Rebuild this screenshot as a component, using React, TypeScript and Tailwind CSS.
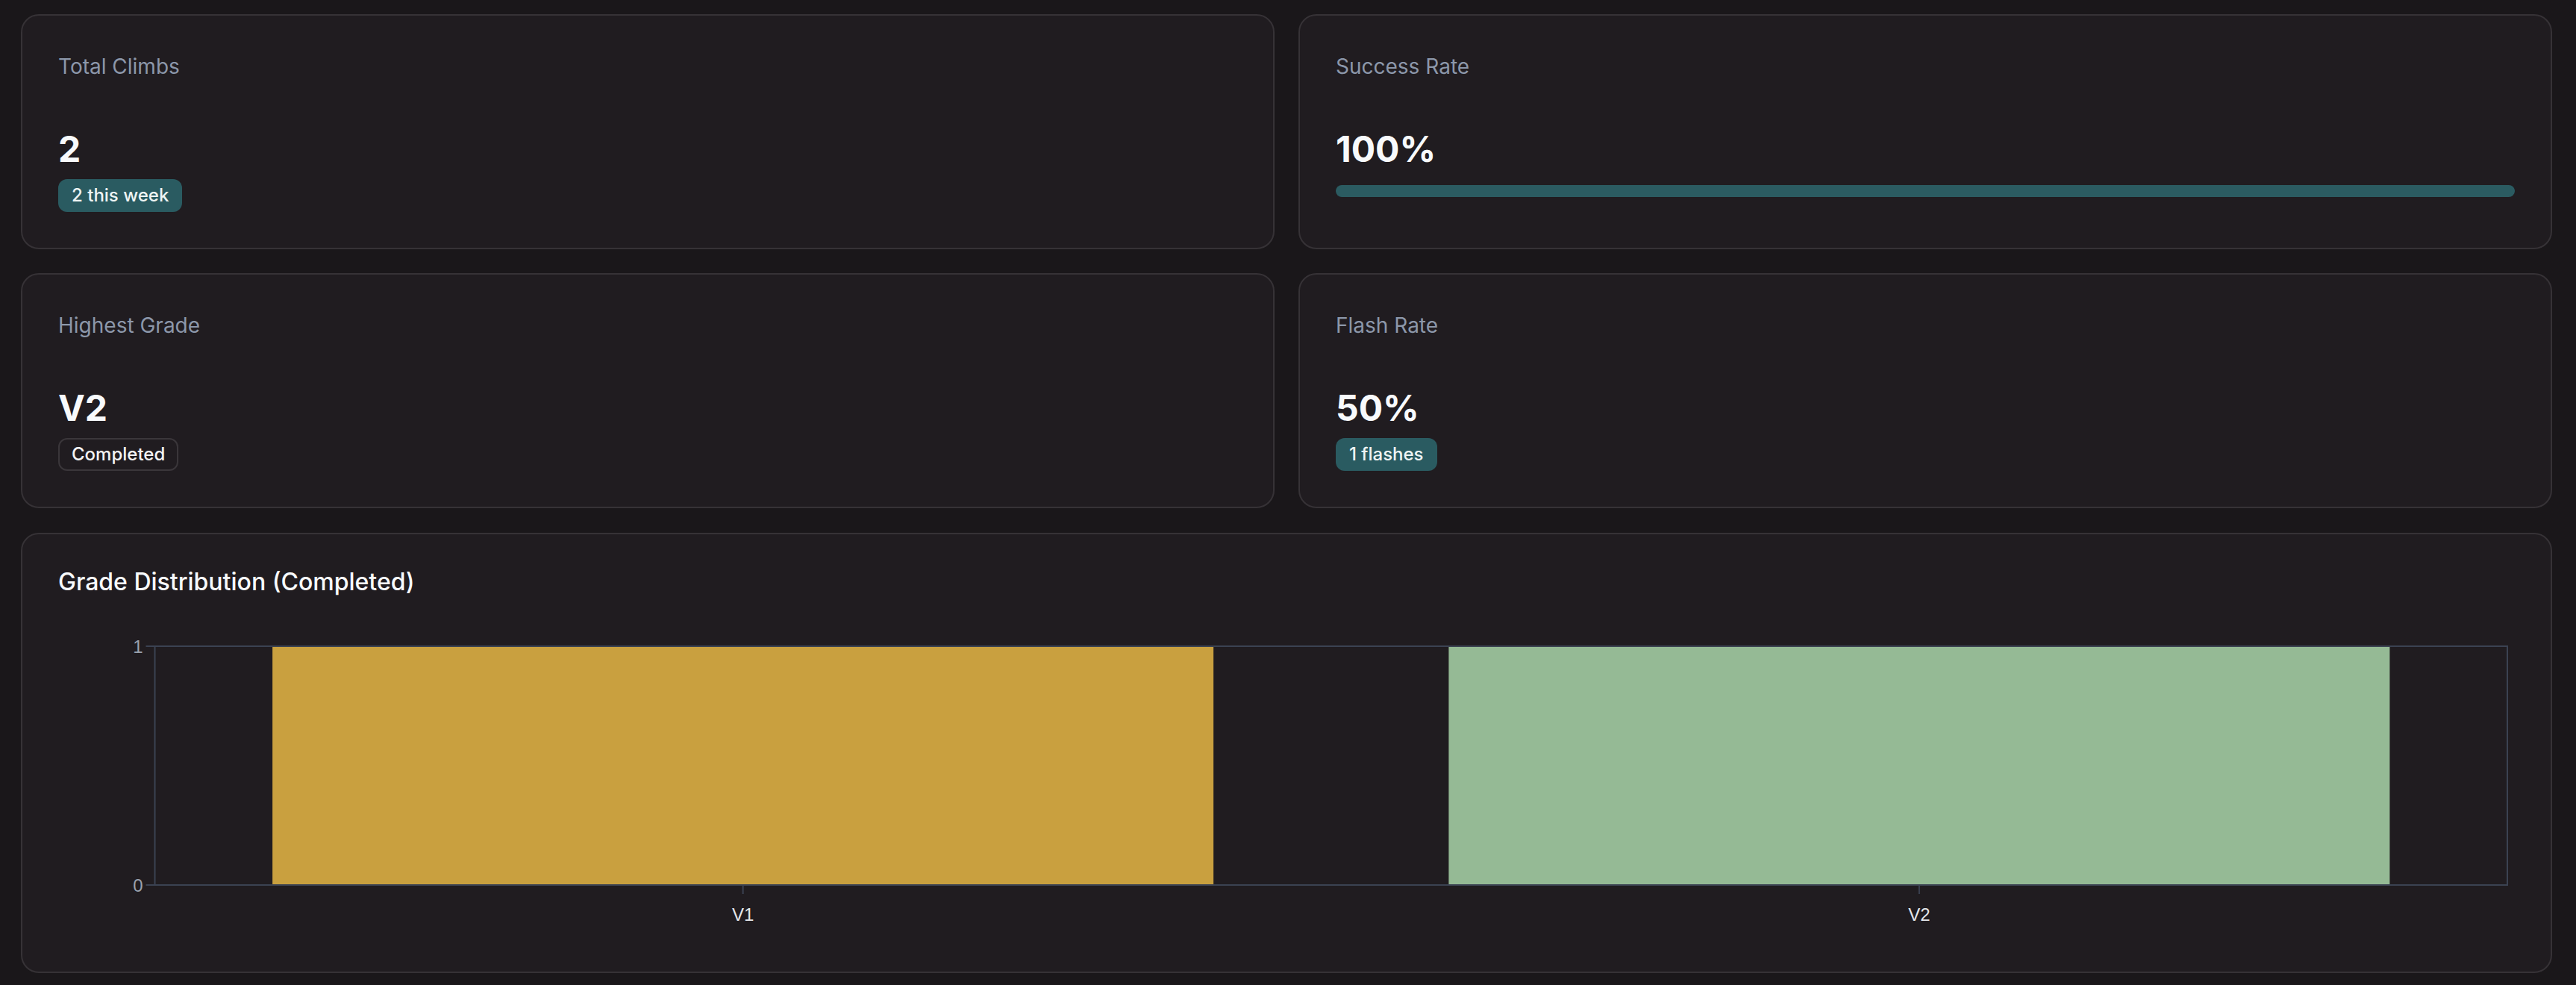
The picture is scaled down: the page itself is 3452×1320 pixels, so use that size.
import React from "react"

type Stat = {
    title: string
    value: string
    badge?: string
    outline?: boolean
    progress?: number
}

const stats: Stat[] = [
    { title: "Total Climbs", value: "2", badge: "2 this week" },
    { title: "Success Rate", value: "100%", progress: 100 },
    { title: "Highest Grade", value: "V2", badge: "Completed", outline: true },
    { title: "Flash Rate", value: "50%", badge: "1 flashes" },
]

const grades = [
    { label: "V1", count: 1, color: "#c9a03f" },
    { label: "V2", count: 1, color: "#95ba95" },
]

function StatCard({ stat }: { stat: Stat }) {
    return (
        <div className="rounded-[24px] border-2 border-[#363236] bg-[#201c20] p-[48px]">
            <div className="text-[28px] leading-[40px] text-[#8c97aa]">{stat.title}</div>
            <div className="mt-[59px] text-[48px] leading-[64px] font-bold text-[#f8fafc]">{stat.value}</div>
            {stat.badge && (
                <div
                    className={
                        stat.outline
                            ? "mt-[8px] inline-flex h-[44px] items-center rounded-[12px] border-2 border-[#3a363a] px-[16px] text-[24px] font-medium text-[#f4f4f5]"
                            : "mt-[8px] inline-flex h-[44px] items-center rounded-[12px] bg-[#2a5b61] px-[18px] text-[24px] font-medium text-[#eef4f4]"
                    }
                >
                    {stat.badge}
                </div>
            )}
            {stat.progress !== undefined && (
                <div className="mt-[16px] h-[16px] w-full overflow-hidden rounded-full bg-[#243f44]">
                    <div className="h-full rounded-full bg-[#2b5b61]" style={{ width: `${stat.progress}%` }} />
                </div>
            )}
        </div>
    )
}

function GradeChart() {
    // pixel coordinates inside the chart box
    const w = 3292
    const h = 458
    const left = 129.5
    const right = 3282
    const top = 70
    const bottom = 390
    const band = (right - left) / grades.length
    const max = 1

    return (
        <svg width={w} height={h} viewBox={`0 0 ${w} ${h}`} className="block">
            {grades.map((g, i) => {
                const x = left + band * i + band * 0.1
                const bh = ((bottom - top) * g.count) / max
                return <rect key={g.label} x={x} y={bottom - bh} width={band * 0.8} height={bh} fill={g.color} />
            })}
            <rect x={left} y={top} width={right - left} height={bottom - top} fill="none" stroke="#3b4252" strokeWidth={2} />
            {[1, 0].map((v) => {
                const y = bottom - ((bottom - top) * v) / max
                return (
                    <g key={v}>
                        <line x1={left - 12} x2={left} y1={y} y2={y} stroke="#3b4252" strokeWidth={2} />
                        <text x={left - 16} y={y + 8.5} textAnchor="end" fontSize={24} fill="#9aa1ad" fontFamily="'Liberation Sans', sans-serif">
                            {v}
                        </text>
                    </g>
                )
            })}
            {grades.map((g, i) => {
                const cx = left + band * i + band / 2
                return (
                    <g key={g.label}>
                        <line x1={cx} x2={cx} y1={bottom} y2={bottom + 12} stroke="#3b4252" strokeWidth={2} />
                        <text x={cx} y={bottom + 48} textAnchor="middle" fontSize={24} fill="#e5e7eb" fontFamily="'Liberation Sans', sans-serif">
                            {g.label}
                        </text>
                    </g>
                )
            })}
        </svg>
    )
}

export default function App() {
    return (
        <div className="min-h-screen bg-[#1a171a] pl-[28px] pr-[32px] pt-[19px] pb-[16px] font-['Inter',sans-serif]">
            <div className="grid grid-cols-2 gap-[32px]">
                {stats.map((s) => (
                    <StatCard key={s.title} stat={s} />
                ))}
            </div>
            <div className="mt-[33px] rounded-[24px] border-2 border-[#363236] bg-[#201c20] px-[48px] pt-[48px] pb-[48px]">
                <h3 className="text-[32px] leading-[32px] font-medium text-[#f8fafc]">Grade Distribution (Completed)</h3>
                <GradeChart />
            </div>
        </div>
    )
}
